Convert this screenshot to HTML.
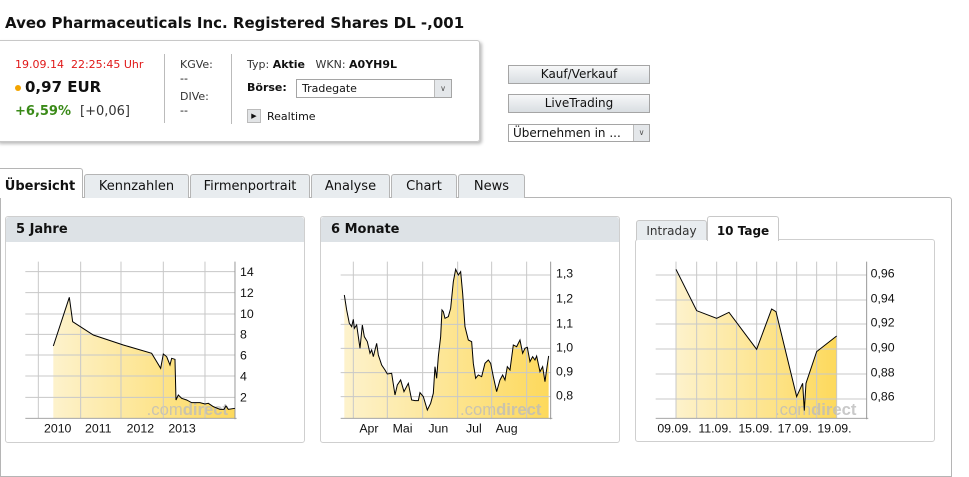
<!DOCTYPE html>
<html><head><meta charset="utf-8"><style>
*{margin:0;padding:0;box-sizing:border-box}
body{width:969px;height:456px;background:#fff;font-family:"DejaVu Sans","Liberation Sans",sans-serif;color:#111;position:relative;overflow:hidden;font-size:12px}
.a{position:absolute;white-space:nowrap}
.tab{position:absolute;top:174px;height:24px;border:1px solid #b5b5b5;border-bottom:none;background:#e8ecef;border-radius:3px 3px 0 0;font-size:13px;text-align:center;line-height:23px;color:#111}
.btn{position:absolute;left:508px;width:142px;height:19px;border:1px solid #a5a5a5;background:linear-gradient(#f6f7f8,#d9dee2);font-size:12px;text-align:center;line-height:17px}
.panel{position:absolute;border:1px solid #cfcfcf;border-radius:3px;background:#fff}
.ph{height:25px;background:#dde2e6;font-weight:bold;font-size:13px;line-height:25px;padding-left:10px;border-radius:3px 3px 0 0}
svg text{font-family:"Liberation Sans",sans-serif}
</style></head><body>
<div class="a" style="left:5px;top:14px;font-size:15px;font-weight:bold">Aveo Pharmaceuticals Inc. Registered Shares DL -,001</div>
<div class="a" style="left:-4px;top:40px;width:484px;height:102px;border:1px solid #c8c8c8;border-radius:3px;box-shadow:2px 2px 3px #bbb"></div>
<div class="a" style="left:15px;top:58px;font-size:11px;color:#e01818">19.09.14&nbsp; 22:25:45 Uhr</div>
<div class="a" style="left:15px;top:85px;width:6px;height:6px;border-radius:3px;background:#f3a400"></div>
<div class="a" style="left:25px;top:78px;font-size:15px;font-weight:bold">0,97 EUR</div>
<div class="a" style="left:15px;top:104px;font-size:13px;color:#3a8a18;font-weight:bold">+6,59%</div>
<div class="a" style="left:80px;top:104px;font-size:13px;color:#333">[+0,06]</div>
<div class="a" style="left:164px;top:54px;width:1px;height:69px;background:#bbb"></div>
<div class="a" style="left:180px;top:58px;font-size:11px;color:#333">KGVe:</div>
<div class="a" style="left:180px;top:72px;font-size:11px">--</div>
<div class="a" style="left:180px;top:90px;font-size:11px;color:#333">DIVe:</div>
<div class="a" style="left:180px;top:104px;font-size:11px">--</div>
<div class="a" style="left:231px;top:54px;width:1px;height:70px;background:#bbb"></div>
<div class="a" style="left:247px;top:58px;font-size:11px;color:#333">Typ: <b style="color:#111">Aktie</b>&nbsp;&nbsp; WKN: <b style="color:#111">A0YH9L</b></div>
<div class="a" style="left:247px;top:81px;font-size:11px;font-weight:bold">Börse:</div>
<div class="a" style="left:296px;top:79px;width:156px;height:19px;border:1px solid #a5a5a5;font-size:11px;padding:2px 5px;line-height:13px">Tradegate<span class="a" style="right:0;top:0;width:17px;height:17px;background:#e4e7ea;border-left:1px solid #bbb;font-size:8px;text-align:center;line-height:17px;color:#555">&#8744;</span></div>
<div class="a" style="left:247px;top:109px;width:14px;height:14px;background:#e2e4e6;border:1px solid #bbb;font-size:7px;text-align:center;line-height:12px">&#9654;</div>
<div class="a" style="left:267px;top:110px;font-size:11px">Realtime</div>
<div class="btn" style="top:65px">Kauf/Verkauf</div>
<div class="btn" style="top:94px">LiveTrading</div>
<div class="a" style="left:508px;top:124px;width:142px;height:18px;border:1px solid #a5a5a5;font-size:12px;padding-left:4px;line-height:16px">Übernehmen in ...<span class="a" style="right:0;top:0;width:16px;height:16px;background:#e4e7ea;border-left:1px solid #bbb;font-size:8px;text-align:center;line-height:16px;color:#555">&#8744;</span></div>

<div class="a" style="left:0;top:197px;width:952px;height:280px;border:1px solid #b5b5b5;border-radius:0 3px 0 0"></div>
<div class="tab" style="left:-3px;top:168px;height:30px;width:86px;background:#fff;font-weight:bold;line-height:36px">Übersicht</div>
<div class="tab" style="left:84px;width:105px">Kennzahlen</div>
<div class="tab" style="left:190px;width:120px">Firmenportrait</div>
<div class="tab" style="left:311px;width:79px">Analyse</div>
<div class="tab" style="left:391px;width:66px">Chart</div>
<div class="tab" style="left:458px;width:67px">News</div>

<svg class="a" style="left:0;top:0" width="969" height="456">
<defs><linearGradient id="g" x1="0" x2="1"><stop offset="0" stop-color="#fdf2cc"/><stop offset="1" stop-color="#fdd95c"/></linearGradient></defs>
</svg>

<div class="panel" style="left:5px;top:216px;width:300px;height:227px"><div class="ph">5 Jahre</div></div>
<div class="panel" style="left:320px;top:216px;width:300px;height:227px"><div class="ph">6 Monate</div></div>
<div class="panel" style="left:635px;top:239px;width:300px;height:203px"></div>
<div class="a" style="left:636px;top:220px;width:71px;height:20px;background:#e8ecef;border:1px solid #c8c8c8;border-bottom:none;border-radius:3px 3px 0 0;font-size:12px;text-align:center;line-height:20px;color:#333">Intraday</div>
<div class="a" style="left:707px;top:216px;width:72px;height:25px;background:#fff;border:1px solid #c8c8c8;border-bottom:none;border-radius:3px 3px 0 0;font-size:12px;font-weight:bold;text-align:center;line-height:28px">10 Tage</div>

<svg class="a" style="left:0;top:0" width="969" height="456">
<g transform="translate(0,210) scale(0.3333)">
<polygon fill="url(#g)" points="160,408 208,262 218,335 280,375 370,405 455,430 470,455 482,475 490,432 500,440 510,465 515,445 525,448 528,570 535,555 545,565 560,570 575,578 600,578 615,582 625,580 640,590 660,598 672,598 678,588 685,598 705,595 705,625 160,625"/>
<text x="440" y="615" font-size="50" fill="#bbb" fill-opacity=".8">.com<tspan font-weight="bold">direct</tspan></text>
<g stroke="#c8c8c8" stroke-width="3">
<path d="M115 155V625M242 155V625M363 155V625M490 155V625M615 155V625M76 185H705M76 248H705M76 312H705M76 373H705M76 435H705M76 498H705M76 562H705"/></g>
<path d="M705 155V628M76 625H710" stroke="#999" stroke-width="3"/>
<polyline fill="none" stroke="#000" stroke-width="3" points="160,408 208,262 218,335 280,375 370,405 455,430 470,455 482,475 490,432 500,440 510,465 515,445 525,448 528,570 535,555 545,565 560,570 575,578 600,578 615,582 625,580 640,590 660,598 672,598 678,588 685,598 705,595"/>
<g font-size="37" fill="#111"><text x="720" y="198">14</text><text x="720" y="261">12</text><text x="720" y="324">10</text><text x="720" y="386">8</text><text x="720" y="448">6</text><text x="720" y="511">4</text><text x="720" y="574">2</text>
<text x="132" y="668">2010</text><text x="255" y="668">2011</text><text x="380" y="668">2012</text><text x="505" y="668">2013</text></g>
</g>

<g transform="translate(310,210) scale(0.3333)">
<polygon fill="url(#g)" points="103,255 110,300 118,340 125,350 130,328 133,355 140,345 150,415 157,345 163,380 172,395 180,430 185,420 190,440 200,400 205,435 215,465 225,480 232,492 245,490 255,555 262,525 272,510 282,545 295,520 305,570 315,572 325,572 330,548 340,560 352,600 362,580 370,550 375,470 380,505 385,440 392,380 396,300 400,305 405,325 415,320 422,295 430,215 437,178 445,195 452,185 458,250 465,350 475,390 485,395 490,460 497,505 505,495 515,500 525,460 535,450 542,460 550,500 560,545 570,510 578,495 585,510 592,470 600,480 610,405 620,410 630,390 638,430 645,415 652,412 660,455 668,440 675,450 680,438 690,485 698,470 705,515 710,478 716,438 716,625 103,625"/>
<text x="450" y="615" font-size="50" fill="#bbb" fill-opacity=".8">.com<tspan font-weight="bold">direct</tspan></text>
<g stroke="#c8c8c8" stroke-width="3"><path d="M130 155V625M232 155V625M338 155V625M443 155V625M545 155V625M650 155V625M92 195H722M92 268H722M92 343H722M92 415H722M92 488H722M92 560H722"/></g>
<path d="M722 155V628M92 625H727" stroke="#999" stroke-width="3"/>
<polyline fill="none" stroke="#000" stroke-width="3" points="103,255 110,300 118,340 125,350 130,328 133,355 140,345 150,415 157,345 163,380 172,395 180,430 185,420 190,440 200,400 205,435 215,465 225,480 232,492 245,490 255,555 262,525 272,510 282,545 295,520 305,570 315,572 325,572 330,548 340,560 352,600 362,580 370,550 375,470 380,505 385,440 392,380 396,300 400,305 405,325 415,320 422,295 430,215 437,178 445,195 452,185 458,250 465,350 475,390 485,395 490,460 497,505 505,495 515,500 525,460 535,450 542,460 550,500 560,545 570,510 578,495 585,510 592,470 600,480 610,405 620,410 630,390 638,430 645,415 652,412 660,455 668,440 675,450 680,438 690,485 698,470 705,515 710,478 716,438"/>
<g font-size="37" fill="#111"><text x="738" y="203">1,3</text><text x="738" y="278">1,2</text><text x="738" y="352">1,1</text><text x="738" y="424">1,0</text><text x="738" y="497">0,9</text><text x="738" y="568">0,8</text>
<text x="148" y="668">Apr</text><text x="248" y="668">Mai</text><text x="355" y="668">Jun</text><text x="468" y="668">Jul</text><text x="557" y="668">Aug</text></g>
</g>

<g transform="translate(620,210) scale(0.3333)">
<polygon fill="url(#g)" points="168,178 230,302 290,325 327,307 410,418 455,297 468,305 530,560 548,520 553,602 558,520 590,425 650,378 650,625 168,625"/>
<text x="465" y="615" font-size="50" fill="#bbb" fill-opacity=".8">.com<tspan font-weight="bold">direct</tspan></text>
<g stroke="#c8c8c8" stroke-width="3"><path d="M168 155V625M230 155V625M290 155V625M350 155V625M410 155V625M470 155V625M530 155V625M590 155V625M650 155V625M107 195H740M107 270H740M107 342H740M107 417H740M107 492H740M107 567H740"/></g>
<path d="M740 155V628M107 625H745" stroke="#999" stroke-width="3"/>
<polyline fill="none" stroke="#000" stroke-width="3" points="168,178 230,302 290,325 327,307 410,418 455,297 468,305 530,560 548,520 553,602 558,520 590,425 650,378"/>
<g font-size="37" fill="#111"><text x="752" y="203">0,96</text><text x="752" y="278">0,94</text><text x="752" y="350">0,92</text><text x="752" y="425">0,90</text><text x="752" y="500">0,88</text><text x="752" y="572">0,86</text>
<text x="112" y="668">09.09.</text><text x="235" y="668">11.09.</text><text x="355" y="668">15.09.</text><text x="473" y="668">17.09.</text><text x="592" y="668">19.09.</text></g>
</g>
</svg>
</body></html>
